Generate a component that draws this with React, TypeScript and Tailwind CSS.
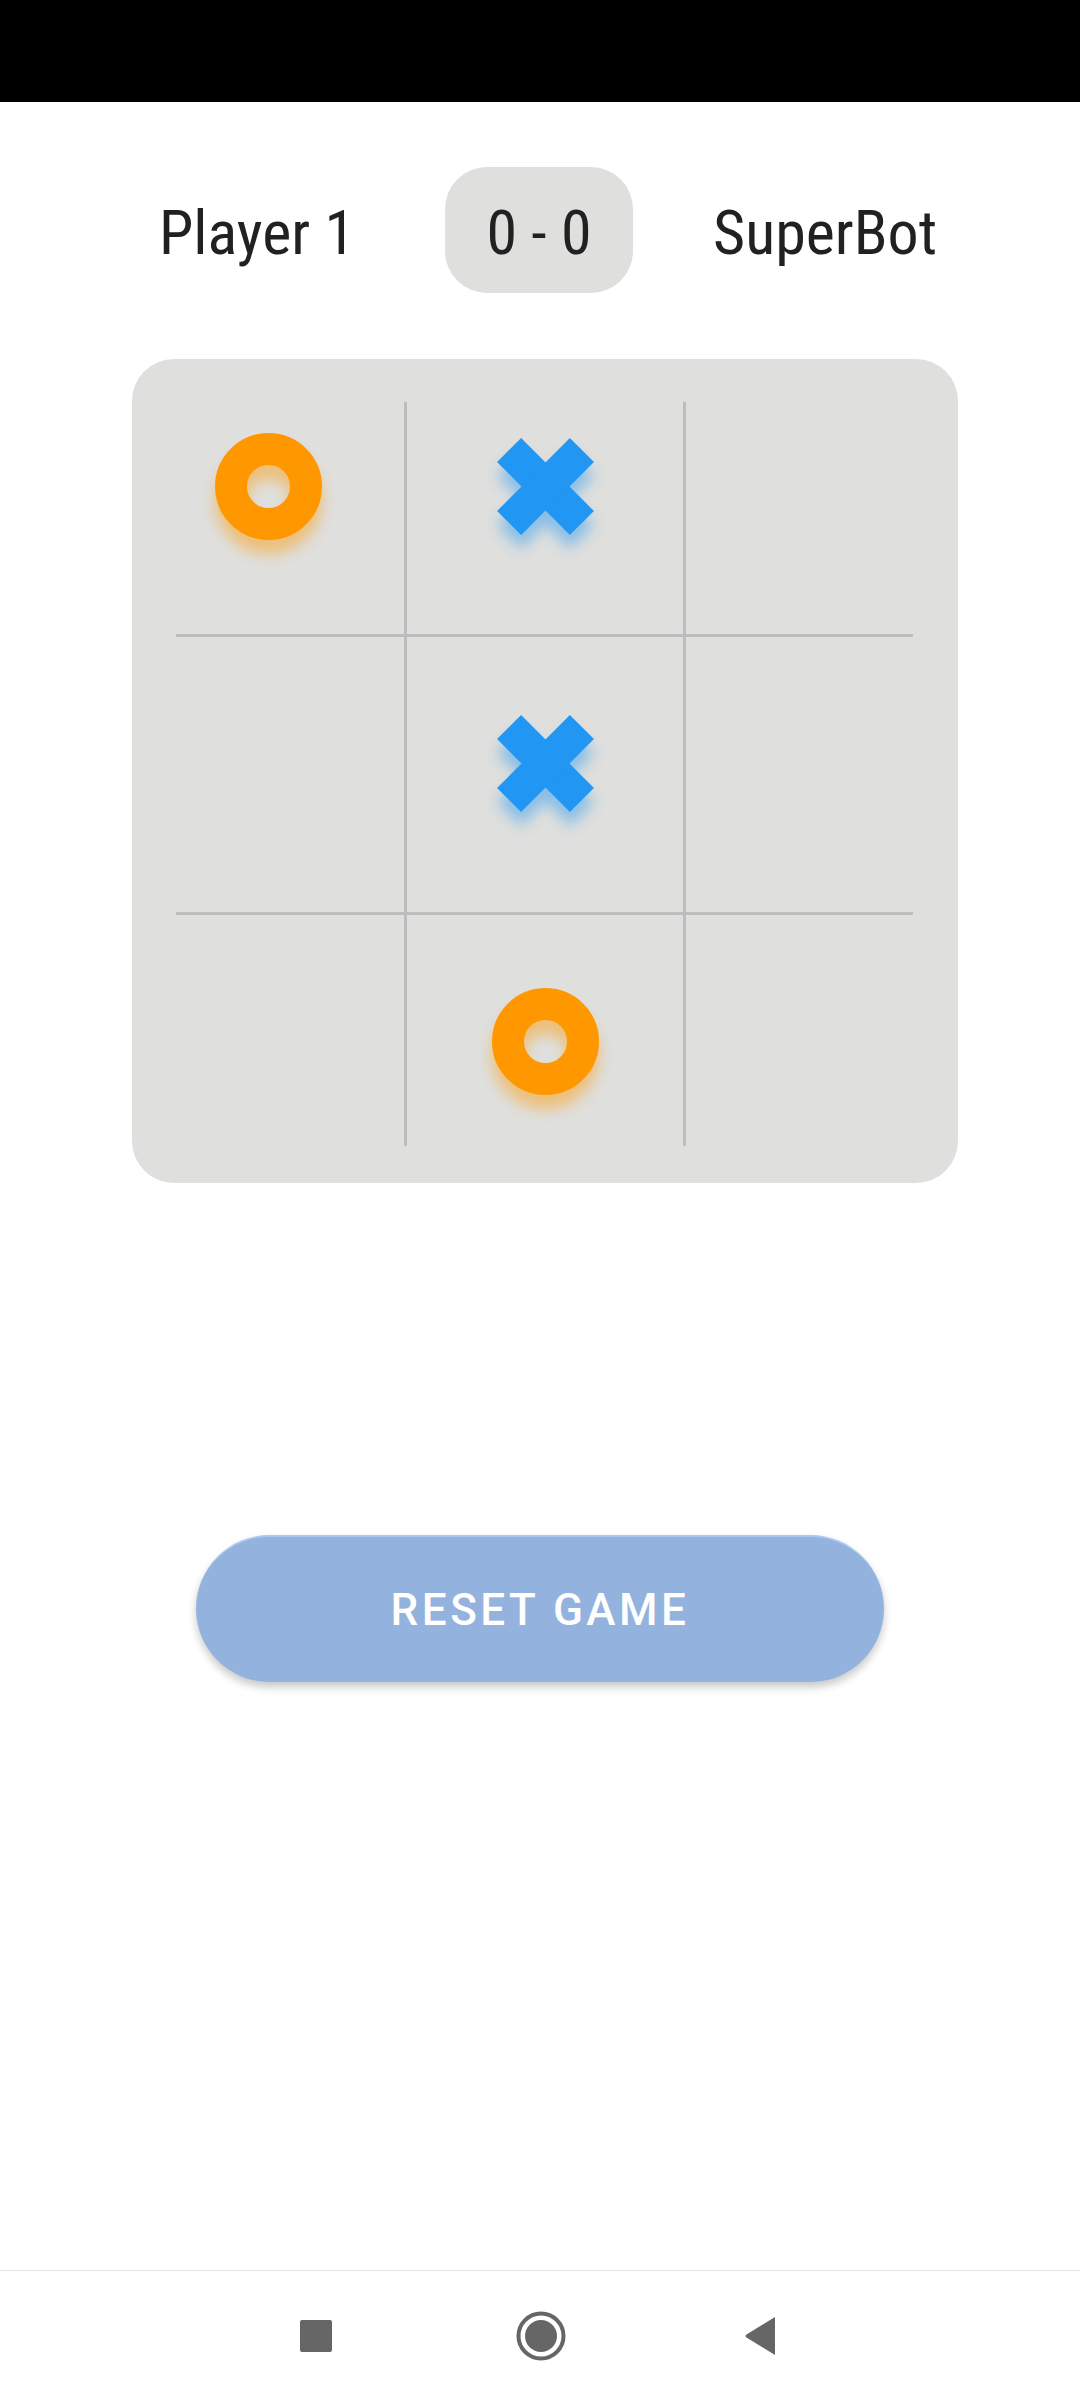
import React from 'react';

type Mark = 'O' | 'X' | null;

const board: Mark[] = ['O', 'X', null, null, 'X', null, null, 'O', null];

function Ring() {
  return (
    <svg
      width="107"
      height="107"
      viewBox="0 0 107 107"
      className="-translate-y-[11px] drop-shadow-[0_14px_7px_rgba(255,152,0,0.45)]"
    >
      <circle cx="53.5" cy="53.5" r="37.5" fill="none" stroke="#FF9800" strokeWidth="32" />
    </svg>
  );
}

function Cross() {
  return (
    <svg
      width="97"
      height="97"
      viewBox="0 0 97 97"
      className="-translate-y-[11px] drop-shadow-[0_14px_7px_rgba(33,150,243,0.45)]"
    >
      <g fill="#2196F3">
        <rect x="-3" y="31.5" width="103" height="34" transform="rotate(45 48.5 48.5)" />
        <rect x="-3" y="31.5" width="103" height="34" transform="rotate(-45 48.5 48.5)" />
      </g>
    </svg>
  );
}

export default function App() {
  return (
    <div
      className="w-[1080px] h-[2400px] bg-white flex flex-col text-[#212121]"
      style={{ fontFamily: '"Roboto", "Noto Sans", sans-serif' }}
    >
      {/* status bar */}
      <div className="h-[102px] bg-black shrink-0" />

      {/* score row */}
      <div
        className="mt-[65px] h-[126px] flex items-center pl-[159px] text-[62px] leading-none"
        style={{ fontFamily: '"Roboto Condensed", "Roboto", sans-serif' }}
      >
        <span className="pt-[5px]">Player 1</span>
        <div className="ml-[90px] w-[188px] h-[126px] rounded-[42px] bg-[#DFDFDD] flex items-center justify-center">
          <span className="pt-[5px]">0 - 0</span>
        </div>
        <span className="ml-[80px] pt-[5px]">SuperBot</span>
      </div>

      {/* board */}
      <div className="mt-[66px] ml-[132px] w-[826px] h-[824px] rounded-[42px] bg-[#DFDFDD] relative">
        <div className="absolute left-[272px] top-[43px] bottom-[37px] w-[3px] bg-[#BDBDBD]" />
        <div className="absolute left-[551px] top-[43px] bottom-[37px] w-[3px] bg-[#BDBDBD]" />
        <div className="absolute top-[275px] left-[44px] right-[45px] h-[3px] bg-[#BDBDBD]" />
        <div className="absolute top-[553px] left-[44px] right-[45px] h-[3px] bg-[#BDBDBD]" />
        <div className="grid grid-cols-[273px_280px_273px] grid-rows-[276px_278px_278px]">
          {board.map((m, i) => (
            <div key={i} className="flex items-center justify-center">
              {m === 'O' && <Ring />}
              {m === 'X' && <Cross />}
            </div>
          ))}
        </div>
      </div>

      {/* reset button */}
      <button className="mt-[352px] ml-[196px] w-[688px] h-[147px] rounded-full bg-[#93B3DE] border-t-2 border-[#A9C8F1] shadow-[0_5px_8px_rgba(0,0,0,0.22)] text-white text-[44px] font-medium tracking-[0.08em] flex items-center justify-center">
        RESET GAME
      </button>

      <div className="flex-1" />

      {/* nav bar */}
      <div className="h-[130px] border-t border-[#E3E3E3] flex items-center pl-[300px]">
        <div className="w-[32px] h-[32px] rounded-[2px] bg-[#666666]" />
        <svg width="50" height="50" viewBox="0 0 50 50" className="ml-[184px]">
          <circle cx="25" cy="25" r="22.5" fill="none" stroke="#666666" strokeWidth="4" />
          <circle cx="25" cy="25" r="16" fill="#666666" />
        </svg>
        <svg width="32" height="38" viewBox="0 0 32 38" className="ml-[178px]">
          <path d="M31 0 L31 38 L2.5 20.5 Q0.5 19 2.5 17.5 Z" fill="#666666" />
        </svg>
      </div>
    </div>
  );
}
